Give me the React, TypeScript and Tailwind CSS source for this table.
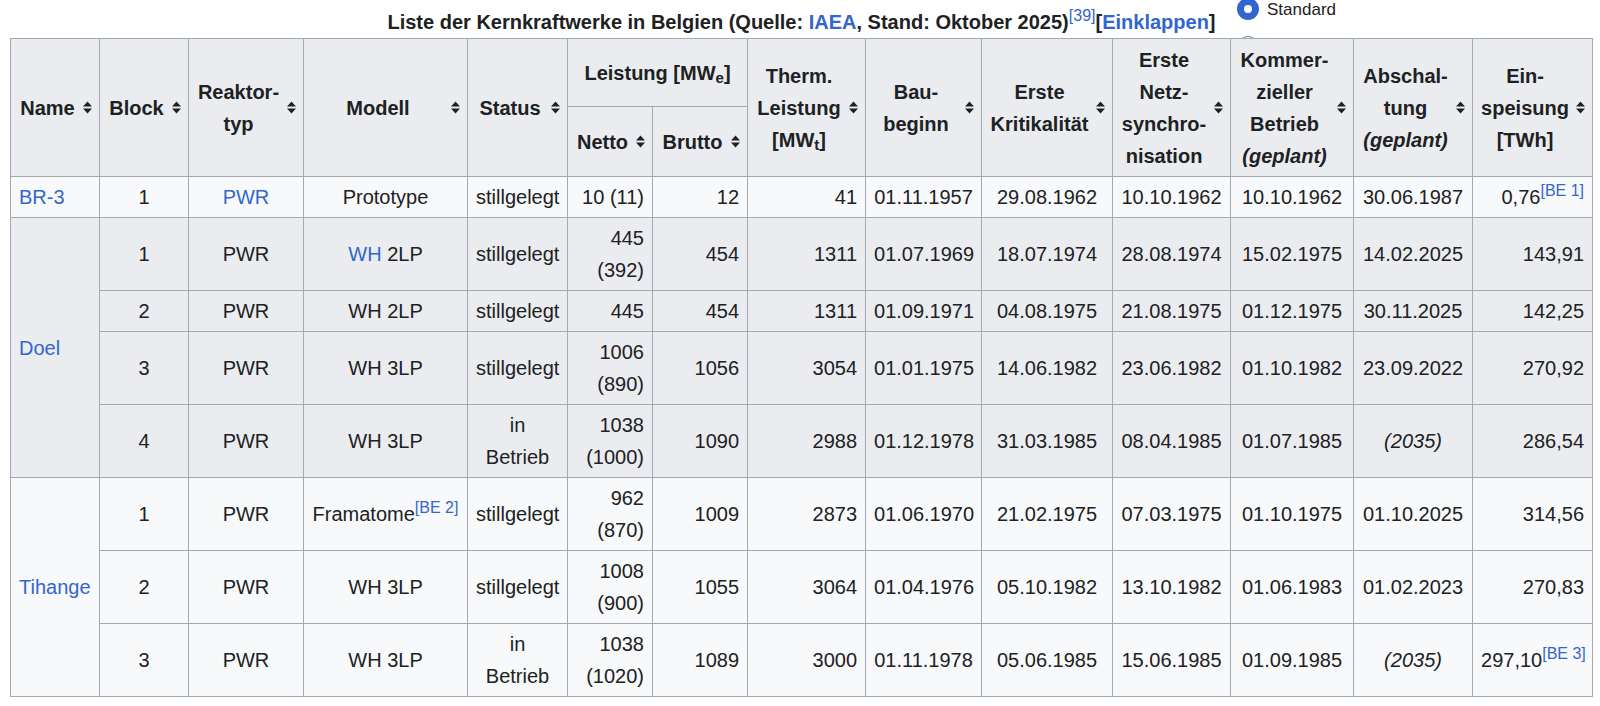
import React from 'react';

type Row = {
  name?: string;
  span?: number;
  bg: string;
  block: string;
  typ: React.ReactNode;
  modell: React.ReactNode;
  status: string;
  netto: string;
  brutto: string;
  therm: string;
  bau: string;
  krit: string;
  netz: string;
  komm: string;
  absch: React.ReactNode;
  eins: React.ReactNode;
};

const Ref: React.FC<{ n: string }> = ({ n }) => (
  <sup className="text-[16px] font-normal text-[#3366cc] whitespace-nowrap">[{n}]</sup>
);

const SortIcon = () => (
  <svg width="9" height="13" viewBox="0 0 9 13" className="block">
    <path d="M4.5 0.5 9 5.5H0z M0 7.5h9L4.5 12.5z" fill="#202122" />
  </svg>
);

const Th: React.FC<{
  children: React.ReactNode;
  rowSpan?: number;
  colSpan?: number;
  sort?: boolean;
}> = ({ children, rowSpan, colSpan, sort = true }) => (
  <th
    rowSpan={rowSpan}
    colSpan={colSpan}
    className={`border border-[#a2a9b1] bg-[#eaecf0] py-1 font-bold align-middle text-center ${
      sort ? 'pl-2 pr-0' : 'px-2'
    }`}
  >
    {sort ? (
      <div className="flex items-center">
        <div className="flex-1 text-center">{children}</div>
        <span className="w-[23px] shrink-0 flex justify-center">
          <SortIcon />
        </span>
      </div>
    ) : (
      children
    )}
  </th>
);

const DOEL = 'bg-[#eaecf0]';
const LIGHT = 'bg-[#f8f9fa]';
const blue = 'text-[#3366cc]';

const rows: Row[] = [
  {
    name: 'BR-3', span: 1, bg: LIGHT, block: '1', typ: <span className={blue}>PWR</span>,
    modell: 'Prototype', status: 'stillgelegt', netto: '10 (11)', brutto: '12', therm: '41',
    bau: '01.11.1957', krit: '29.08.1962', netz: '10.10.1962', komm: '10.10.1962',
    absch: '30.06.1987', eins: <>0,76<Ref n="BE 1" /></>,
  },
  {
    name: 'Doel', span: 4, bg: DOEL, block: '1', typ: 'PWR',
    modell: <><span className={blue}>WH</span> 2LP</>, status: 'stillgelegt', netto: '445 (392)',
    brutto: '454', therm: '1311', bau: '01.07.1969', krit: '18.07.1974', netz: '28.08.1974',
    komm: '15.02.1975', absch: '14.02.2025', eins: '143,91',
  },
  {
    bg: DOEL, block: '2', typ: 'PWR', modell: 'WH 2LP', status: 'stillgelegt', netto: '445',
    brutto: '454', therm: '1311', bau: '01.09.1971', krit: '04.08.1975', netz: '21.08.1975',
    komm: '01.12.1975', absch: '30.11.2025', eins: '142,25',
  },
  {
    bg: DOEL, block: '3', typ: 'PWR', modell: 'WH 3LP', status: 'stillgelegt', netto: '1006 (890)',
    brutto: '1056', therm: '3054', bau: '01.01.1975', krit: '14.06.1982', netz: '23.06.1982',
    komm: '01.10.1982', absch: '23.09.2022', eins: '270,92',
  },
  {
    bg: DOEL, block: '4', typ: 'PWR', modell: 'WH 3LP', status: 'in Betrieb', netto: '1038 (1000)',
    brutto: '1090', therm: '2988', bau: '01.12.1978', krit: '31.03.1985', netz: '08.04.1985',
    komm: '01.07.1985', absch: <i>(2035)</i>, eins: '286,54',
  },
  {
    name: 'Tihange', span: 3, bg: LIGHT, block: '1', typ: 'PWR',
    modell: <span className="whitespace-nowrap">Framatome<Ref n="BE 2" /></span>, status: 'stillgelegt',
    netto: '962 (870)', brutto: '1009', therm: '2873', bau: '01.06.1970', krit: '21.02.1975',
    netz: '07.03.1975', komm: '01.10.1975', absch: '01.10.2025', eins: '314,56',
  },
  {
    bg: LIGHT, block: '2', typ: 'PWR', modell: 'WH 3LP', status: 'stillgelegt', netto: '1008 (900)',
    brutto: '1055', therm: '3064', bau: '01.04.1976', krit: '05.10.1982', netz: '13.10.1982',
    komm: '01.06.1983', absch: '01.02.2023', eins: '270,83',
  },
  {
    bg: LIGHT, block: '3', typ: 'PWR', modell: 'WH 3LP', status: 'in Betrieb', netto: '1038 (1020)',
    brutto: '1089', therm: '3000', bau: '01.11.1978', krit: '05.06.1985', netz: '15.06.1985',
    komm: '01.09.1985', absch: <i>(2035)</i>, eins: <>297,10<Ref n="BE 3" /></>,
  },
];

const colWidths = [
  'w-[89px]', 'w-[89px]', 'w-[115px]', 'w-[164px]', 'w-[100px]', 'w-[85px]', 'w-[95px]',
  'w-[118px]', 'w-[116px]', 'w-[131px]', 'w-[118px]', 'w-[123px]', 'w-[119px]', 'w-[120px]',
];

const td = 'border border-[#a2a9b1] px-2 py-1 align-middle';

export default function App() {
  return (
    <div className="relative min-h-[706px] bg-white pt-[6px] pl-[10px] font-['Liberation_Sans',Arial,sans-serif] text-[20px] leading-[32px] text-[#202122]">
      {/* appearance menu peeking in at the top right */}
      <div className="absolute left-[1237px] top-[-2px] z-0 h-[22px] w-[22px] rounded-full border-[7px] border-[#3366cc] bg-white" />
      <div className="absolute left-[1267px] top-0 z-0 text-[17px] leading-[20px]">Standard</div>
      <div className="absolute left-[1238px] top-[36px] z-0 h-5 w-5 rounded-full border border-[#72777d] bg-white" />

      <table className="relative z-10 w-[1582px] table-fixed border-collapse">
        <caption className="font-bold text-center leading-[32px]">
          Liste der Kernkraftwerke in Belgien (Quelle: <span className={blue}>IAEA</span>, Stand: Oktober 2025)
          <Ref n="39" />[<span className={blue}>Einklappen</span>]
        </caption>
        <colgroup>
          {colWidths.map((w, i) => (
            <col key={i} className={w} />
          ))}
        </colgroup>
        <thead>
          <tr className="h-[68px]">
            <Th rowSpan={2}>Name</Th>
            <Th rowSpan={2}>Block</Th>
            <Th rowSpan={2}>
              Reaktor-<br />typ
            </Th>
            <Th rowSpan={2}>Modell</Th>
            <Th rowSpan={2}>Status</Th>
            <Th colSpan={2} sort={false}>
              Leistung [MW<sub>e</sub>]
            </Th>
            <Th rowSpan={2}>
              Therm.<br />Leistung<br />[MW<sub>t</sub>]
            </Th>
            <Th rowSpan={2}>
              Bau-<br />beginn
            </Th>
            <Th rowSpan={2}>
              Erste<br />Kritikalität
            </Th>
            <Th rowSpan={2}>
              Erste<br />Netz-<br />synchro-<br />nisation
            </Th>
            <Th rowSpan={2}>
              Kommer-<br />zieller<br />Betrieb<br /><i>(geplant)</i>
            </Th>
            <Th rowSpan={2}>
              Abschal-<br />tung<br /><i>(geplant)</i>
            </Th>
            <Th rowSpan={2}>
              Ein-<br />speisung<br />[TWh]
            </Th>
          </tr>
          <tr className="h-[70px]">
            <Th>Netto</Th>
            <Th>Brutto</Th>
          </tr>
        </thead>
        <tbody>
          {rows.map((r, i) => (
            <tr key={i}>
              {r.name && (
                <td rowSpan={r.span} className={`${td} ${r.bg} text-left ${blue}`}>
                  {r.name}
                </td>
              )}
              <td className={`${td} ${r.bg} text-center`}>{r.block}</td>
              <td className={`${td} ${r.bg} text-center`}>{r.typ}</td>
              <td className={`${td} ${r.bg} text-center`}>{r.modell}</td>
              <td className={`${td} ${r.bg} text-center`}>{r.status}</td>
              <td className={`${td} ${r.bg} text-right`}>{r.netto}</td>
              <td className={`${td} ${r.bg} text-right`}>{r.brutto}</td>
              <td className={`${td} ${r.bg} text-right`}>{r.therm}</td>
              <td className={`${td} ${r.bg} text-center`}>{r.bau}</td>
              <td className={`${td} ${r.bg} text-center`}>{r.krit}</td>
              <td className={`${td} ${r.bg} text-center`}>{r.netz}</td>
              <td className={`${td} ${r.bg} text-center`}>{r.komm}</td>
              <td className={`${td} ${r.bg} text-center`}>{r.absch}</td>
              <td className={`${td} ${r.bg} text-right whitespace-nowrap`}>{r.eins}</td>
            </tr>
          ))}
        </tbody>
      </table>
    </div>
  );
}
